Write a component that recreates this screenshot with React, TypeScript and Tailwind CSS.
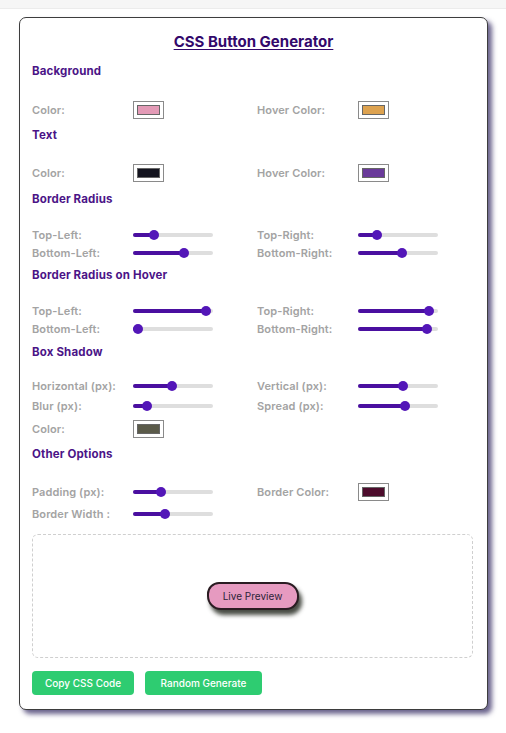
import React from "react";

const font = { fontFamily: "Inter, 'Noto Sans', sans-serif" };

function Slider({ value }: { value: number }) {
  const pos = 5 + value * 70;
  return (
    <div className="relative h-[4px] w-[80px] rounded-full bg-[#dedede]">
      <div
        className="absolute left-0 top-0 h-[4px] rounded-full bg-[#4a0fa0]"
        style={{ width: `${pos}px` }}
      />
      <div
        className="absolute top-[-3px] h-[10px] w-[10px] rounded-full bg-[#5316b8]"
        style={{ left: `${pos - 5}px` }}
      />
    </div>
  );
}

function Swatch({ color }: { color: string }) {
  return (
    <div className="flex h-[18px] w-[31px] items-center justify-center border border-[#8a8a8a] bg-white">
      <div className="h-[10px] w-[23px] border border-[#666]" style={{ background: color }} />
    </div>
  );
}

function Field({ label, children }: { label: string; children?: React.ReactNode }) {
  return (
    <div className="flex items-center">
      <span className="w-[101px] text-[11px] font-semibold tracking-[0.1px] text-[#a3a3a3]">{label}</span>
      {children}
    </div>
  );
}

function Heading({ text, mt }: { text: string; mt: string }) {
  return (
    <h3 className={`${mt} h-[16px] text-[11.5px] font-bold leading-[16px] tracking-[0.15px] text-[#4b1487]`}>
      {text}
    </h3>
  );
}

export default function App() {
  return (
    <div className="min-h-[733px] bg-white" style={font}>
      <div className="h-[9px] border-b border-[#ececec] bg-[#f6f6f6]" />
      <div className="ml-[19px] mt-[8px] w-[469px] rounded-[7px] border border-[#3d3d3d] bg-white px-[12px] pb-[14px] pt-[15px] shadow-[4px_4px_5px_rgba(55,45,100,0.75)]">
        <h1 className="h-[18px] text-center text-[15px] font-bold leading-[18px] text-[#33096b] underline underline-offset-2">
          CSS Button Generator
        </h1>

        <Heading text="Background" mt="mt-[12px]" />
        <div className="mt-[22px] grid h-[18px] grid-cols-[225px_1fr]">
          <Field label="Color:"><Swatch color="#e39ab6" /></Field>
          <Field label="Hover Color:"><Swatch color="#dda24f" /></Field>
        </div>

        <Heading text="Text" mt="mt-[8px]" />
        <div className="mt-[21px] grid h-[18px] grid-cols-[225px_1fr]">
          <Field label="Color:"><Swatch color="#14141f" /></Field>
          <Field label="Hover Color:"><Swatch color="#6a3a9a" /></Field>
        </div>

        <Heading text="Border Radius" mt="mt-[9px]" />
        <div className="mt-[19px] grid grid-cols-[225px_1fr] grid-rows-[18px_18px]">
          <Field label="Top-Left:"><Slider value={0.23} /></Field>
          <Field label="Top-Right:"><Slider value={0.2} /></Field>
          <Field label="Bottom-Left:"><Slider value={0.66} /></Field>
          <Field label="Bottom-Right:"><Slider value={0.56} /></Field>
        </div>

        <Heading text="Border Radius on Hover" mt="mt-[5px]" />
        <div className="mt-[19px] grid grid-cols-[225px_1fr] grid-rows-[18px_18px]">
          <Field label="Top-Left:"><Slider value={0.97} /></Field>
          <Field label="Top-Right:"><Slider value={0.94} /></Field>
          <Field label="Bottom-Left:"><Slider value={0} /></Field>
          <Field label="Bottom-Right:"><Slider value={0.91} /></Field>
        </div>

        <Heading text="Box Shadow" mt="mt-[6px]" />
        <div className="mt-[17px] grid grid-cols-[225px_1fr] grid-rows-[18px_18px] gap-y-[2px]">
          <Field label="Horizontal (px):"><Slider value={0.49} /></Field>
          <Field label="Vertical (px):"><Slider value={0.57} /></Field>
          <Field label="Blur (px):"><Slider value={0.13} /></Field>
          <Field label="Spread (px):"><Slider value={0.6} /></Field>
        </div>
        <div className="mt-[5px] h-[18px]">
          <Field label="Color:"><Swatch color="#5b5b4a" /></Field>
        </div>

        <Heading text="Other Options" mt="mt-[8px]" />
        <div className="mt-[21px] grid h-[18px] grid-cols-[225px_1fr]">
          <Field label="Padding (px):"><Slider value={0.33} /></Field>
          <Field label="Border Color:"><Swatch color="#4d0c2c" /></Field>
        </div>
        <div className="mt-[5px] h-[18px]">
          <Field label="Border Width :"><Slider value={0.39} /></Field>
        </div>

        <div className="mt-[10px] flex h-[124px] w-[441px] items-center justify-center rounded-[6px] border border-dashed border-[#cfcfcf]">
          <button className="h-[28px] w-[92px] rounded-tl-[12px] rounded-tr-[14px] rounded-bl-[14px] rounded-br-[13px] border-2 border-[#2a1c22] bg-[#e69ac0] text-[10px] text-[#2c2438] shadow-[3px_5px_4px_rgba(40,45,35,0.85)]">
            Live Preview
          </button>
        </div>

        <div className="mt-[13px] flex gap-[11px]">
          <button className="h-[24px] w-[102px] rounded-[4px] bg-[#2ecc71] text-[10px] font-medium text-white">
            Copy CSS Code
          </button>
          <button className="h-[24px] w-[117px] rounded-[4px] bg-[#2ecc71] text-[10px] font-medium text-white">
            Random Generate
          </button>
        </div>
      </div>
    </div>
  );
}
